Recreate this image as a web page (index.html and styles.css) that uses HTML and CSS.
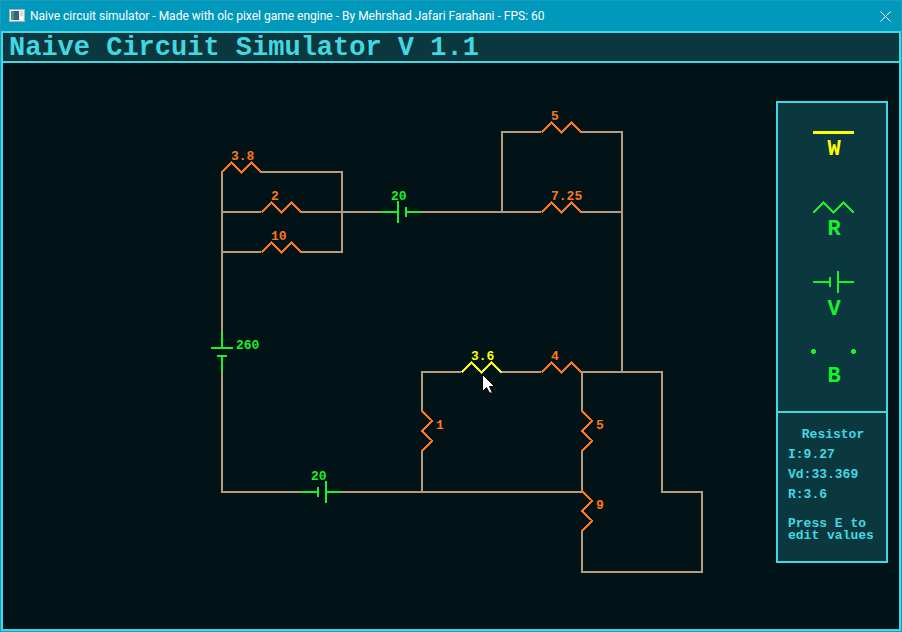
FILE: index.html
```html
<!DOCTYPE html>
<html lang="en">
<head>
<meta charset="utf-8">
<meta name="viewport" content="width=device-width, initial-scale=1">
<title>Naive circuit simulator</title>
<link rel="stylesheet" href="styles.css">
</head>
<body>
<div class="window">
  <header class="titlebar">
    <svg class="titlebar-icon" width="16" height="14" viewBox="0 0 16 14" aria-hidden="true">
      <rect x="0.5" y="0.5" width="15" height="12" fill="#f1f1f1" stroke="#a9b4b8"/>
      <path d="M2 2h4v9h-4z" fill="#4c9277"/>
      <path d="M5 2h5v9h-5z" fill="#34657f"/>
      <path d="M11 2h3v5h-3z" fill="#dadada"/>
      <path d="M11 8h3v3h-3z" fill="#ffffff"/>
    </svg>
    <span class="titlebar-text">Naive circuit simulator - Made with olc pixel game engine - By Mehrshad Jafari Farahani - FPS: 60</span>
    <button class="close" type="button" aria-label="Close">
      <svg width="11" height="11" viewBox="0 0 11 11"><path d="M0.5 0.5l10 10M10.5 0.5l-10 10"/></svg>
    </button>
  </header>

  <div class="app">
    <h1 class="heading">Naive Circuit Simulator V 1.1</h1>
    <main class="workspace">
      <svg class="board" viewBox="3 63 773 566" role="img" aria-label="Circuit">
        <defs>
          <path id="res-h" d="M-20.5 .5L-10.5 -9.5L-.5 .5L9.5 -9.5L20 1"/>
          <path id="res-v" d="M-.5 -20.5L10.5 -10L0 0L10.5 10L-.5 20.5"/>
          <path id="cell-h" d="M-21 0H-4M-4 -11V11M4 -5V5M4 0H19"/>
          <path id="cell-flip" d="M-21 0H-4M-4 -5V5M4 -11V11M4 0H19"/>
          <path id="cell-v" d="M0 -20V-4M-11 -4H11M-5 4H5M0 4V19"/>
        </defs>
        <g class="wires">
          <path d="M222 172V332M222 371V492H301M341 492H582"/>
          <path d="M261 172H342V252H301M261 252H222M222 212H261M301 212H381M421 212H541"/>
          <path d="M502 212V132H541M581 132H622V372M581 212H622"/>
          <path d="M422 492V452M422 411V372H461M501 372H541M581 372H662V492H702V572H582V532"/>
          <path d="M582 372V411M582 452V492"/>
        </g>
        <g class="resistors">
          <use href="#res-h" x="242" y="172"/>
          <use href="#res-h" x="282" y="212"/>
          <use href="#res-h" x="282" y="252"/>
          <use href="#res-h" x="562" y="132"/>
          <use href="#res-h" x="562" y="212"/>
          <use href="#res-h" x="562" y="372"/>
          <use href="#res-v" x="422" y="431"/>
          <use href="#res-v" x="582" y="431"/>
          <use href="#res-v" x="582" y="511"/>
        </g>
        <use class="selected" href="#res-h" x="482" y="372"/>
        <g class="cells">
          <use href="#cell-h" x="402" y="212"/>
          <use href="#cell-flip" x="322" y="492"/>
          <use href="#cell-v" x="222" y="352"/>
        </g>
        <g class="value">
          <text x="231" y="160">3.8</text>
          <text x="271" y="200">2</text>
          <text x="271" y="240">10</text>
          <text x="551" y="120">5</text>
          <text x="551" y="200">7.25</text>
          <text x="551" y="360">4</text>
          <text x="436" y="429">1</text>
          <text x="596" y="429">5</text>
          <text x="596" y="509">9</text>
        </g>
        <g class="value value-cell">
          <text x="391" y="200">20</text>
          <text x="311" y="480">20</text>
          <text x="236" y="349">260</text>
        </g>
        <text class="value value-selected" x="471" y="360">3.6</text>
        <path class="pointer" d="M482.500 374.500V391.500L486.500 387.500L489.500 393H492.500L489.500 386.500H494.500Z"/>
      </svg>

      <aside class="panel">
        <div class="tools">
          <button class="tool tool-active" type="button">
            <svg width="42" height="38" viewBox="0 0 42 38" aria-hidden="true"><path class="thick" d="M0 29.500H41"/></svg>
            <span>W</span>
          </button>
          <button class="tool" type="button">
            <svg width="42" height="38" viewBox="0 0 42 38" aria-hidden="true"><path d="M0 30L10.500 19.500L20.500 29.500L30.500 19.500L41 30"/></svg>
            <span>R</span>
          </button>
          <button class="tool" type="button">
            <svg width="42" height="38" viewBox="0 0 42 38" aria-hidden="true"><path d="M0 19H17M17 14V24M25 8V30M25 19H41"/></svg>
            <span>V</span>
          </button>
          <button class="tool tool-short" type="button">
            <svg width="48" height="25" viewBox="0 0 48 25" aria-hidden="true"><path class="dots" d="M2 6h3v1h1v3h-1v1h-3v-1h-1v-3h1zM42 6h3v1h1v3h-1v1h-3v-1h-1v-3h1z"/></svg>
            <span>B</span>
          </button>
        </div>
        <section class="info">
          <h2>Resistor</h2>
          <p>I:9.27</p>
          <p>Vd:33.369</p>
          <p>R:3.6</p>
          <p class="hint">Press E to<br>edit values</p>
        </section>
      </aside>
    </main>
  </div>
</div>
</body>
</html>
```
FILE: styles.css
```css
:root {
  --cyan: #40d9e3;
  --panel: #0b373e;
  --bg: #011316;
  --green: #17f12e;
  --orange: #ff7619;
  --yellow: #ffff00;
  --wire: #b69b7d;
  --mono: "Liberation Mono", monospace;
}

* { box-sizing: border-box; }

body { margin: 0; background: var(--bg); }

h1, h2, p { margin: 0; }

button {
  border: 0;
  padding: 0;
  background: none;
  color: inherit;
}

.window {
  display: flex;
  flex-direction: column;
  min-height: 100vh;
  border: 1px solid #1a9dbf;
  background: #0099bc;
}

.titlebar {
  display: flex;
  align-items: center;
  height: 30px;
  padding: 0 10px 0 8px;
  color: #fff;
}

.titlebar-icon { flex: none; margin-right: 5px; }

.titlebar-text {
  flex: 1;
  font: 12px/16px Roboto, sans-serif;
  white-space: nowrap;
  overflow: hidden;
}

.close { display: flex; }
.close path { stroke: #fff; fill: none; }

.app {
  flex: 1;
  border: 2px solid var(--cyan);
  background: var(--bg);
  font-family: var(--mono);
  font-weight: bold;
}

.heading {
  padding: 2px 0 0 6px;
  border-bottom: 2px solid var(--cyan);
  background: var(--panel);
  color: var(--cyan);
  font-size: 27px;
  line-height: 26px;
  white-space: nowrap;
}

.workspace {
  display: flex;
  align-items: flex-start;
  padding-right: 11px;
}

.board { display: block; flex: 1; min-width: 0; }

.board path, .board use {
  fill: none;
  stroke-width: 2px;
  shape-rendering: crispEdges;
}

.wires { stroke: var(--wire); stroke-linejoin: miter; }
.resistors { stroke: var(--orange); }
.cells { stroke: var(--green); }
.selected { stroke: var(--yellow); }
.value { fill: var(--orange); font-size: 13px; }
.value-cell { fill: var(--green); }
.value-selected { fill: var(--yellow); }

.board .pointer { fill: #fff; stroke: #000; stroke-width: 1px; shape-rendering: auto; }

.panel {
  flex: none;
  width: 112px;
  margin-top: 38px;
  border: 2px solid var(--cyan);
  background: var(--panel);
  color: var(--cyan);
}

.tools { border-bottom: 2px solid var(--cyan); }

.tool {
  display: flex;
  flex-direction: column;
  align-items: center;
  gap: 2px;
  width: 100%;
  height: 80px;
  padding-left: 4px;
  color: var(--green);
  font: bold 22px/14px var(--mono);
}

.tool-active { color: var(--yellow); }
.tool-short { height: 68px; }

.tool svg { flex: none; }

.tool path {
  fill: none;
  stroke: currentColor;
  stroke-width: 2px;
  shape-rendering: crispEdges;
}

.tool .thick { stroke-width: 3px; }
.tool .dots { fill: currentColor; stroke: none; }

.info {
  padding: 12px 0 19px 10px;
  font-size: 13px;
  line-height: 20px;
}

.info h2 {
  padding-right: 8px;
  font-size: 13px;
  text-align: center;
}

.info .hint { margin-top: 13px; line-height: 12px; }
```
